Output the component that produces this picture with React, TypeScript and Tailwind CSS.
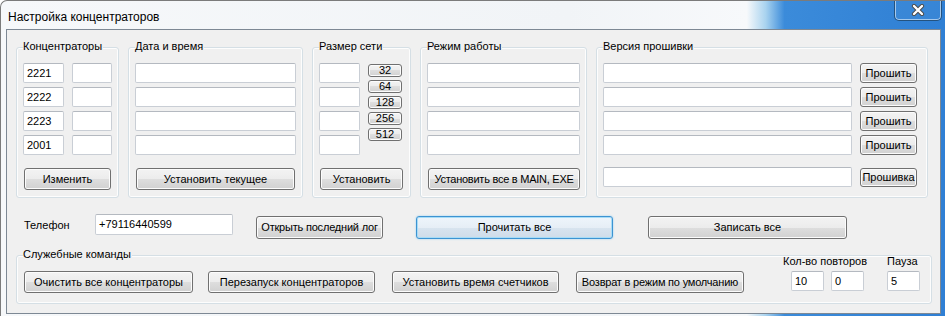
import type { ReactNode } from "react";

const ui = "font-['Liberation_Sans',Arial,sans-serif] text-[11px] text-black";

function Box({ value = "", className = "" }: { value?: string; className?: string }) {
  return (
    <div
      className={`flex items-center pl-[3px] bg-white border border-[#c9ced5] border-t-[#b4b9c0] rounded-[2px] leading-none ${className}`}
    >
      {value}
    </div>
  );
}

function Btn({ children, className = "" }: { children: ReactNode; className?: string }) {
  return (
    <button
      className={`flex items-center justify-center whitespace-nowrap border border-[#707070] rounded-[3px] bg-[linear-gradient(#f3f3f3_0%,#ececec_50%,#dedede_50%,#d1d1d1_100%)] shadow-[inset_0_0_0_1px_#fcfcfc] leading-none ${className}`}
    >
      {children}
    </button>
  );
}

function Group({
  title,
  className = "",
  children,
}: {
  title: string;
  className?: string;
  children: ReactNode;
}) {
  return (
    <div className={`flex flex-col border border-[#d5dfe5] rounded-[3px] shadow-[inset_0_0_0_1px_#fdfdfd] ${className}`}>
      <div className="-mt-[8px] ml-[6px] self-start bg-[#f0f0f0] pr-[1px] leading-[13px] whitespace-nowrap">
        {title}
      </div>
      {children}
    </div>
  );
}

export default function App() {
  const hubs = ["2221", "2222", "2223", "2001"];
  const sizes = ["32", "64", "128", "256", "512"];

  return (
    <div className="w-[945px] h-[316px] overflow-hidden rounded-tl-[7px] border-t border-l border-[#7b7b7b] bg-[linear-gradient(90deg,#f6f8fa_0%,#f1f4f7_60%,#f7f9fb_79%,#a9d3ef_81%,#3b8bda_83%,#2f7fd4_100%)]">
      {/* title bar */}
      <div className="flex justify-between h-[28px]">
        <div className="mt-[9px] ml-[7px] leading-[14px] text-[12px] text-black font-['Liberation_Sans',Arial,sans-serif]">
          Настройка концентраторов
        </div>
        <div className="mr-[3px] -mt-px w-[48px] h-[21px] flex items-center justify-center rounded-b-[5px] border border-[#24527e] border-t-0 bg-[#4d95dc]/30 shadow-[inset_0_0_0_1px_rgba(255,255,255,0.55)]">
          <svg width="14" height="12" viewBox="0 0 14 12">
            <path d="M3 2 L11 10 M11 2 L3 10" stroke="#4a4a4a" strokeWidth="4.2" strokeLinecap="round" />
            <path d="M3 2 L11 10 M11 2 L3 10" stroke="#ffffff" strokeWidth="2.4" strokeLinecap="round" />
          </svg>
        </div>
      </div>

      {/* client area */}
      <div className={`ml-[5px] w-[935px] h-[285px] border border-[#7d8894] bg-[#f0f0f0] ${ui}`}>
        <div className="flex gap-[9px] pl-[9px] pt-[17px]">
          <Group title="Концентраторы" className="w-[103px] h-[151px]">
            <div className="mt-[10px] pl-[6px] flex flex-col gap-[4px]">
              {hubs.map((h) => (
                <div key={h} className="flex gap-[8px]">
                  <Box value={h} className="w-[41px] h-[20px]" />
                  <Box className="w-[40px] h-[20px]" />
                </div>
              ))}
            </div>
            <Btn className="ml-[7px] mt-[13px] w-[87px] h-[22px]">Изменить</Btn>
          </Group>

          <Group title="Дата и время" className="w-[175px] h-[151px]">
            <div className="mt-[10px] pl-[6px] flex flex-col gap-[4px]">
              {hubs.map((h) => (
                <Box key={h} className="w-[161px] h-[20px]" />
              ))}
            </div>
            <Btn className="ml-[7px] mt-[13px] w-[159px] h-[22px]">Установить текущее</Btn>
          </Group>

          <Group title="Размер сети" className="w-[99px] h-[151px]">
            <div className="mt-[10px] pl-[6px] flex gap-[8px]">
              <div className="flex flex-col gap-[4px]">
                {hubs.map((h) => (
                  <Box key={h} className="w-[41px] h-[20px]" />
                ))}
              </div>
              <div className="mt-[1px] flex flex-col gap-[3px]">
                {sizes.map((s) => (
                  <Btn key={s} className="w-[34px] h-[13px] rounded-[2px] text-[11px]">
                    {s}
                  </Btn>
                ))}
              </div>
            </div>
            <Btn className="ml-[7px] mt-[13px] w-[83px] h-[22px]">Установить</Btn>
          </Group>

          <Group title="Режим работы" className="w-[167px] h-[151px]">
            <div className="mt-[10px] pl-[6px] flex flex-col gap-[4px]">
              {hubs.map((h) => (
                <Box key={h} className="w-[153px] h-[20px]" />
              ))}
            </div>
            <Btn className="ml-[7px] mt-[13px] w-[152px] h-[22px] tracking-[-0.25px]">Установить все в MAIN, EXE</Btn>
          </Group>

          <Group title="Версия прошивки" className="w-[332px] h-[151px]">
            <div className="mt-[10px] pl-[6px] flex flex-col gap-[4px]">
              {hubs.map((h) => (
                <div key={h} className="flex items-center gap-[8px]">
                  <Box className="w-[249px] h-[20px]" />
                  <Btn className="w-[57px] h-[20px]">Прошить</Btn>
                </div>
              ))}
              <div className="mt-[8px] flex items-center gap-[8px]">
                <Box className="w-[249px] h-[20px]" />
                <Btn className="w-[57px] h-[19px]">Прошивка</Btn>
              </div>
            </div>
          </Group>
        </div>

        {/* phone row */}
        <div className="flex items-start pl-[17px] mt-[16px]">
          <div className="w-[71px] mt-[5px] leading-[13px]">Телефон</div>
          <Box value="+79116440599" className="w-[138px] h-[21px]" />
          <Btn className="ml-[23px] mt-[2px] w-[127px] h-[23px] tracking-[-0.2px]">Открыть последний лог</Btn>
          <button className="ml-[33px] mt-[2px] w-[197px] h-[23px] flex items-center justify-center leading-none rounded-[3px] border border-[#3c93d2] bg-[linear-gradient(#eef5fb_0%,#e6eef6_50%,#d8e4ef_50%,#cfdce9_100%)] shadow-[inset_0_0_0_1px_#a8dcf6,0_0_2px_#8fcff2]">
            Прочитать все
          </button>
          <Btn className="ml-[35px] mt-[2px] w-[199px] h-[23px]">Записать все</Btn>
        </div>

        {/* service commands */}
        <Group title="Служебные команды" className="ml-[9px] mt-[16px] w-[916px] h-[49px]">
          <div className="flex items-start">
            <div className="flex pl-[7px] mt-[10px]">
              <Btn className="w-[169px] h-[22px]">Очистить все концентраторы</Btn>
              <Btn className="ml-[15px] w-[167px] h-[22px]">Перезапуск концентраторов</Btn>
              <Btn className="ml-[17px] w-[167px] h-[22px]">Установить время счетчиков</Btn>
              <Btn className="ml-[17px] w-[168px] h-[22px] tracking-[-0.2px]">Возврат в режим по умолчанию</Btn>
            </div>
            <div className="ml-[39px] -mt-[6px] w-[86px] flex flex-col">
              <div className="leading-[13px] whitespace-nowrap">Кол-во повторов</div>
              <div className="mt-[3px] pl-[8px] flex gap-[7px]">
                <Box value="10" className="w-[33px] h-[20px]" />
                <Box value="0" className="w-[33px] h-[20px]" />
              </div>
            </div>
            <div className="ml-[18px] -mt-[6px] flex flex-col">
              <div className="leading-[13px]">Пауза</div>
              <Box value="5" className="mt-[3px] w-[33px] h-[20px]" />
            </div>
          </div>
        </Group>
      </div>
    </div>
  );
}
